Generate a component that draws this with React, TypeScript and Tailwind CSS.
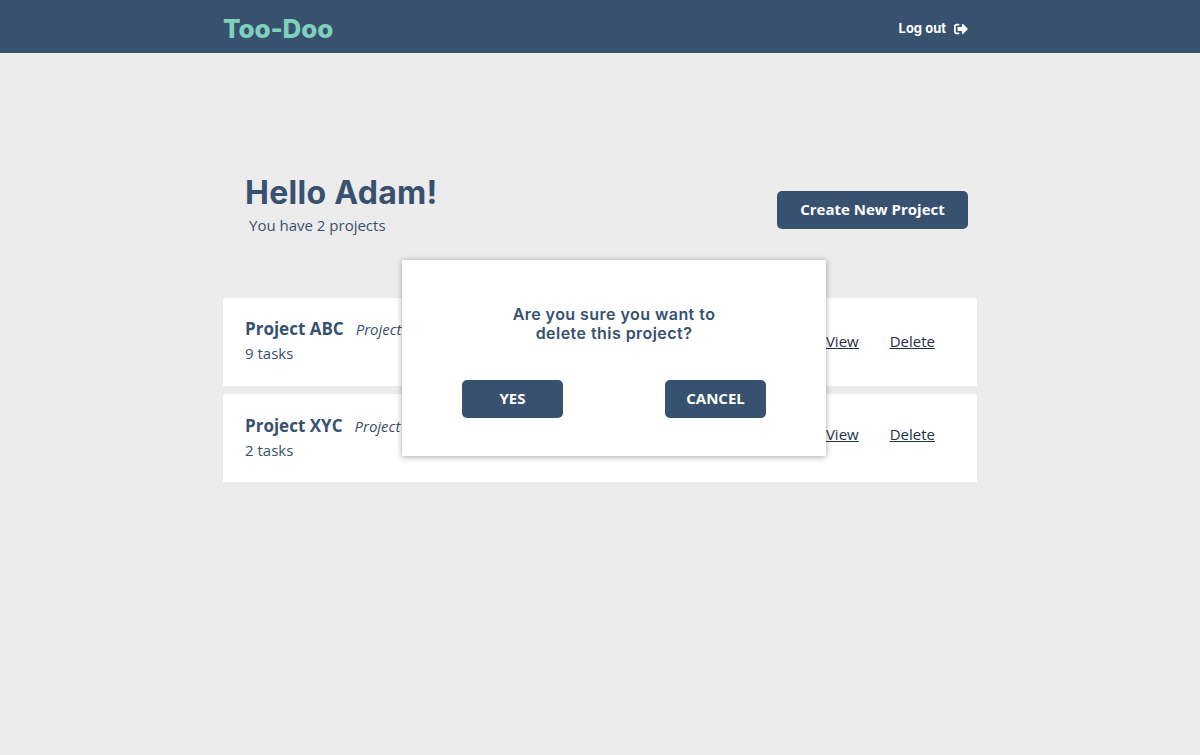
import { FaSignOutAlt } from "react-icons/fa";

const sans = "font-['Open_Sans',sans-serif]";
const head = "font-['Inter',sans-serif]";

function Row({ name, desc, tasks, textTop, linkTop }: { name: string; desc: string; tasks: string; textTop: string; linkTop: string }) {
  return (
    <div className="flex h-[88px] items-start justify-between bg-white pl-[22px] pr-[42px]">
      <div className={textTop}>
        <div className="flex items-baseline leading-[26px]">
          <span className="text-[17px] font-bold text-[#37516f]">{name}</span>
          <span className="ml-[12px] text-[15px] italic text-[#37516f]">{desc}</span>
        </div>
        <div className="mt-[-1px] text-[15px] leading-[24px] text-[#37516f]">{tasks}</div>
      </div>
      <div className={`flex gap-[31px] text-[15px] leading-[24px] text-[#1f3047] underline ${linkTop}`}>
        <a>View</a>
        <a>Delete</a>
      </div>
    </div>
  );
}

export default function App() {
  return (
    <div className={`relative min-h-[755px] bg-[#ececec] ${sans}`}>
      <header className="h-[53px] bg-[#37516f]">
        <div className="mx-auto flex h-full w-[754px] items-center justify-between pr-[9px] pt-[3px]">
          <div className={`${head} text-[26px] font-extrabold tracking-[-0.1px] text-[#7fd1bc]`}>Too-Doo</div>
          <div className={`${head} flex items-center gap-[8px] pt-[1px] text-[13px] font-bold text-white`}>
            Log out <FaSignOutAlt className="text-[14px]" />
          </div>
        </div>
      </header>
      <main className="mx-auto w-[754px] pt-[119px]">
        <div className="flex items-start justify-between pl-[22px] pr-[9px]">
          <div>
            <h1 className={`${head} text-[32px] font-bold leading-[42px] tracking-[0.3px] text-[#37516f]`}>Hello Adam!</h1>
            <p className="ml-[4px] mt-[-1px] text-[15px] leading-[24px] text-[#37516f]">You have 2 projects</p>
          </div>
          <button className="mt-[19px] h-[38px] w-[191px] rounded-[5px] bg-[#37516f] pb-[1px] text-[15px] font-bold text-white">
            Create New Project
          </button>
        </div>
        <div className="mt-[61px] flex flex-col gap-[8px]">
          <Row name="Project ABC" desc="Project description" tasks="9 tasks" textTop="pt-[18px]" linkTop="pt-[31px]" />
          <Row name="Project XYC" desc="Project description" tasks="2 tasks" textTop="pt-[19px]" linkTop="pt-[28px]" />
        </div>
      </main>
      <div className="absolute left-[402px] top-[260px] h-[196px] w-[424px] bg-white shadow-[0_1px_6px_rgba(0,0,0,0.35)]">
        <p className={`${head} pt-[45px] text-center text-[16px] font-semibold leading-[19px] tracking-[0.45px] text-[#37516f]`}>
          Are you sure you want to
          <br />
          delete this project?
        </p>
        <div className="mt-[37px] flex justify-between px-[60px]">
          <button className="h-[38px] w-[101px] rounded-[5px] bg-[#37516f] pb-[1px] text-[15px] font-bold text-white">YES</button>
          <button className="h-[38px] w-[101px] rounded-[5px] bg-[#37516f] pb-[1px] text-[15px] font-bold text-white">CANCEL</button>
        </div>
      </div>
    </div>
  );
}
